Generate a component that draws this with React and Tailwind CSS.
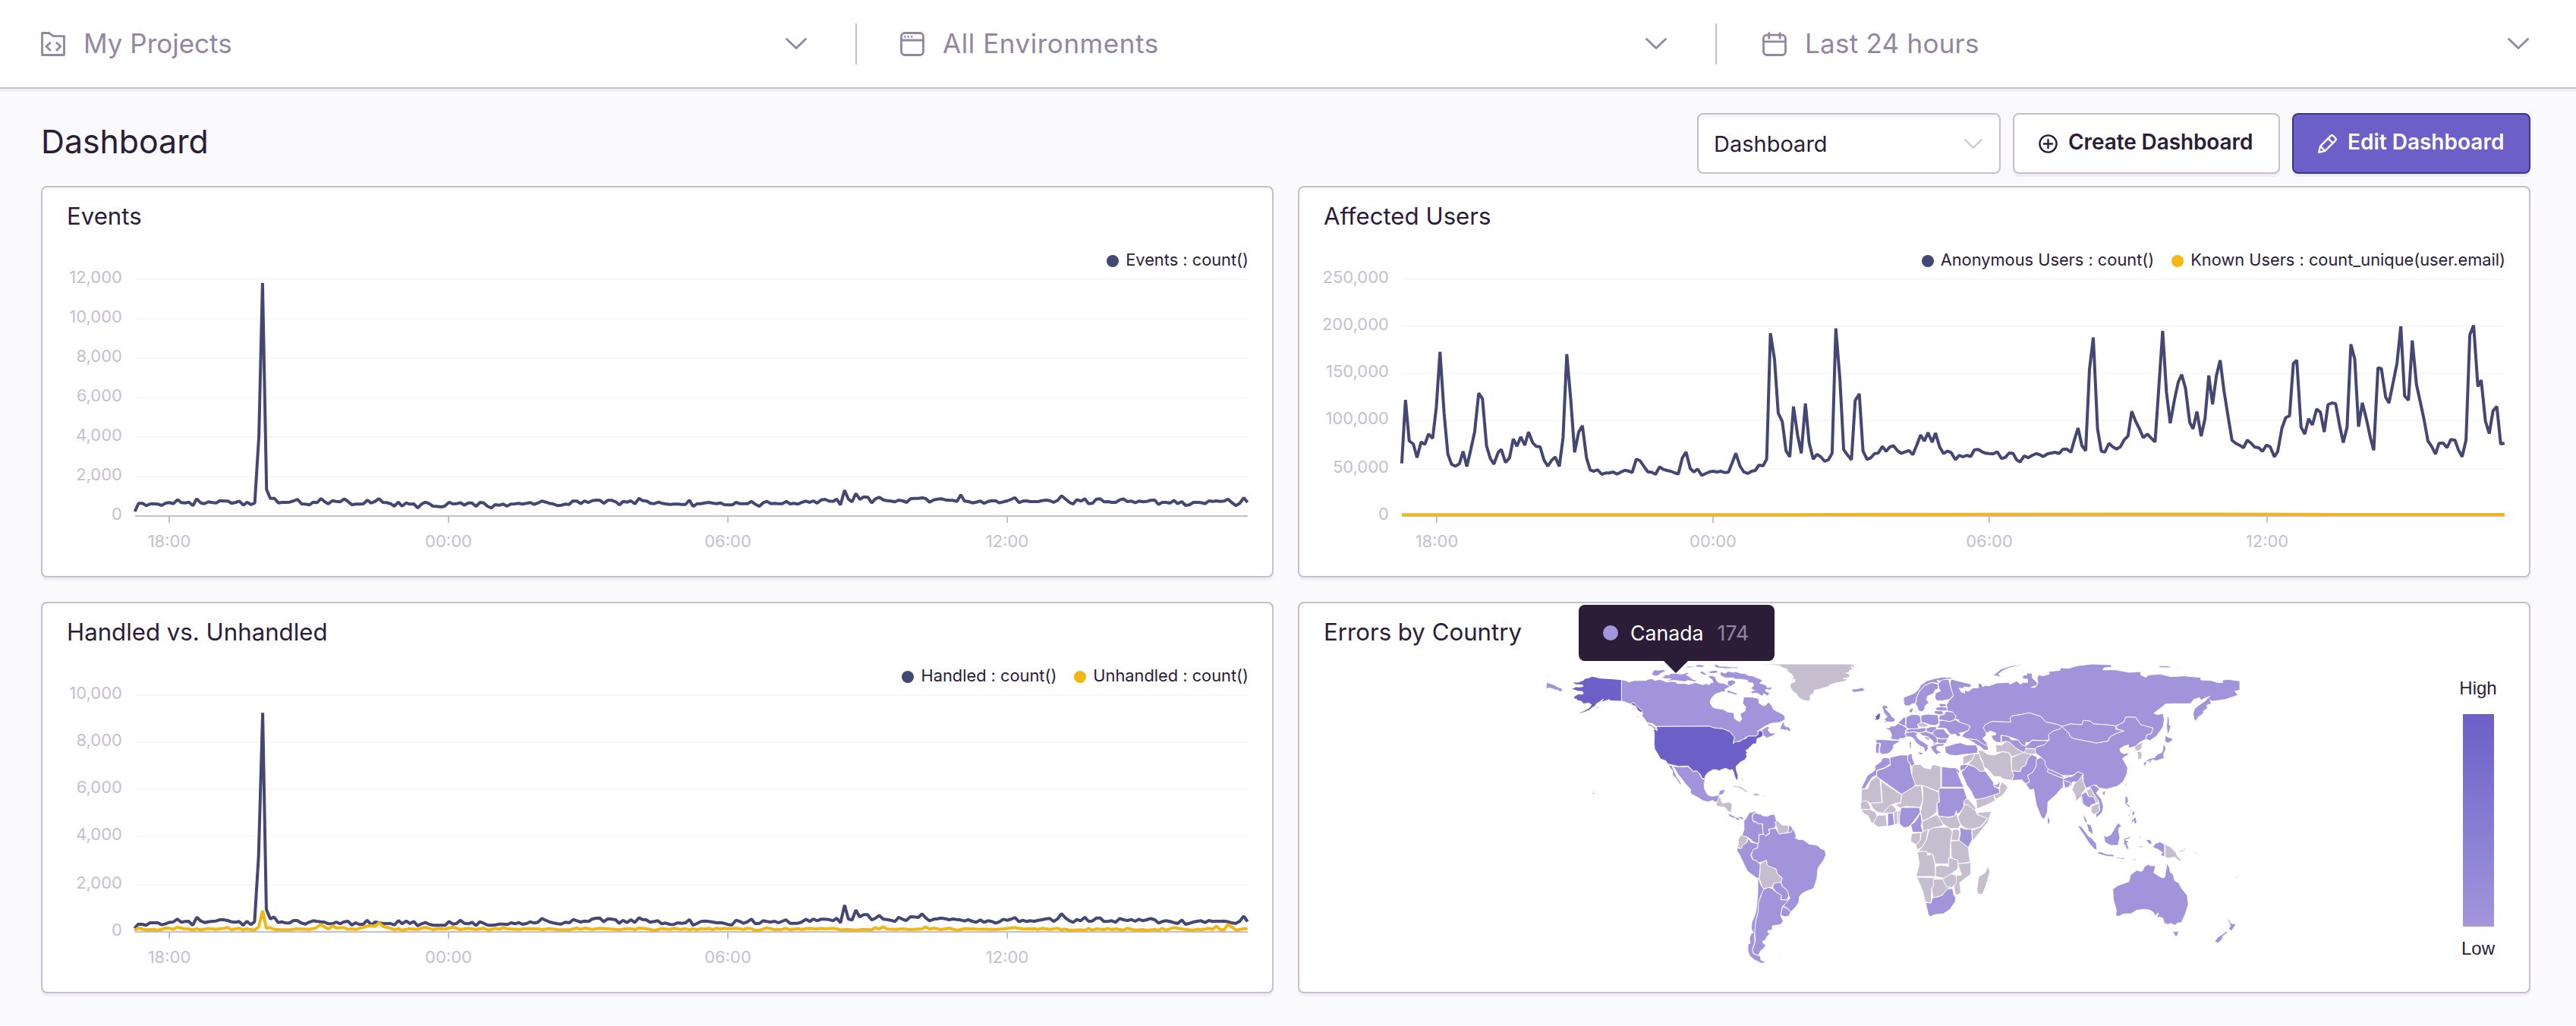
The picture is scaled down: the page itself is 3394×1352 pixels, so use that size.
import React from "react";

const NAVY = "#444674";
const GOLD = "#f2b712";

/* ---------- chart data: [offset, scale] frames and sampled points ---------- */

const trace = (segments) =>
  segments
    .flatMap(({ x, y, k, pts }) =>
      pts
        .trim()
        .split(/\s+/)
        .map((p) => {
          const [a, b] = p.split(",").map(Number);
          return `${(a / k + x).toFixed(1)},${(b / 3 + y).toFixed(1)}`;
        })
    )
    .join(" ");

const events = trace([
  {
    x: -16,
    y: -15,
    k: 1.8667,
    pts: "257,1002 266,970 276,970 285,979 295,972 304,972 314,973 323,978 333,969 342,967 352,971 362,955 371,967 380,968 390,965 400,979 409,952 419,968 428,971 438,964 447,967 457,968 466,959 476,961 486,961 495,970 505,966 514,961 524,977 533,965 543,975 552,968 562,705 571,98 581,915 590,950 600,950 610,968 619,966 629,966 638,965 648,960 657,954 667,972 676,973 686,976 696,965 705,967 715,951 724,964 733,972 743,959 752,962 762,964 772,952 781,962 791,976 800,973 810,973 819,972 829,957 838,969 848,962 857,951 867,966 876,967 886,971 895,981 905,965 914,981 924,968 933,973 943,972 953,988 962,973 971,965 981,971 990,981 1000,982 1010,984 1019,981 1030,965 1039,972 1049,971 1058,967 1067,977 1077,968 1086,968 1096,982 1106,966 1115,968 1124,981 1134,988 1143,975 1153,977 1163,973 1172,981 1182,973 1191,972 1201,970 1210,973 1220,970 1230,967 1239,974 1249,968 1258,961 1268,965 1277,970 1287,973 1297,979 1306,977 1316,973 1325,974 1334,961 1344,961 1354,971 1363,960 1372,967 1382,959 1392,957 1401,958 1411,970 1420,958 1430,958 1440,964 1449,976 1458,962 1468,965 1477,960 1487,972 1497,950 1506,959 1516,961 1525,970 1535,971 1545,965 1554,970 1563,972",
  },
  {
    x: 804,
    y: 185,
    k: 1.8233,
    pts: "42,374 51,373 60,373 70,374 79,374 88,357 97,382 107,371 116,371 125,368 135,366 144,369 153,371 163,368 172,375 181,376 191,376 200,366 209,371 218,371 228,371 237,362 246,373 256,382 265,368 274,362 284,371 293,370 302,371 311,371 321,362 330,372 339,370 349,373 358,366 368,361 377,366 386,360 395,369 405,356 414,354 423,361 433,362 442,353 451,376 461,318 470,353 479,364 488,331 498,354 507,344 517,346 526,368 535,352 544,346 554,356 563,359 572,361 582,364 591,357 600,360 610,366 619,352 628,350 638,350 647,348 656,351 665,365 675,356 684,353 693,352 703,356 712,358 721,358 731,362 740,336 749,361 759,363 768,368 777,365 787,361 796,370 805,363 814,359 824,360 833,368 842,364 852,360 861,354 870,347 880,367 889,361 898,360 907,363 917,363 926,363 935,359 945,357 954,359 963,366 973,358 982,340 991,352 1001,366 1010,373 1019,355 1029,361 1038,352 1047,371 1056,370 1066,353 1075,352 1084,364 1094,363 1103,366 1112,366 1122,356 1131,352 1140,363 1150,361 1159,367 1168,361 1178,364 1187,362 1196,358 1206,357 1215,374 1224,366 1233,366 1243,369 1252,358 1261,371 1271,363 1280,378 1289,376 1299,366 1308,366 1317,367 1327,371 1336,360 1345,362 1354,360 1363,362 1373,361 1382,353 1392,368 1401,379 1410,370 1420,348 1429,366",
  },
]);

const anonymous = trace([
  {
    x: -12,
    y: -15,
    k: 1.8447,
    pts: "271,812 280,561 289,723 299,735 308,789 318,727 327,737 336,696 346,713 355,590 364,371 374,615 383,775 392,815 401,823 411,814 420,764 429,824 439,755 448,688 458,534 467,556 477,743 486,792 495,815 505,769 513,757 523,808 533,790 542,715 551,744 560,707 570,740 579,688 589,730 598,745 607,746 617,800 626,823 635,800 644,787 654,824 663,710 672,380 682,565 691,768 701,688 710,663 720,790 729,838 738,843 747,837 757,855 766,850 775,850 785,846 794,854 804,846 813,839 822,842 831,848 841,795 850,801 860,825 869,845 878,847 888,855 897,826 906,835 916,840 925,843 934,849 943,854 953,790 962,767 972,832 981,846 990,834 1000,859 1010,852 1019,845 1028,843 1037,846 1046,843 1056,848 1065,847 1074,810 1083,772 1093,822 1102,845 1112,852 1121,843 1130,840 1139,819 1149,821 1158,795 1167,297 1177,400 1186,613 1196,647 1205,763 1214,786 1223,587 1233,700 1242,772 1252,575 1261,730 1271,795 1280,776 1289,785 1299,804 1308,797 1317,772 1326,278 1336,480 1345,757 1354,778 1364,798 1373,563 1383,537 1392,763 1402,796 1411,790 1420,773 1429,771 1439,745 1448,764 1457,747 1466,742 1476,762 1485,772 1495,766 1504,761 1513,778 1523,738 1532,700 1541,724 1550,690 1560,728",
  },
  {
    x: 808,
    y: -15,
    k: 1.7941,
    pts: "54,692 64,748 73,773 82,763 91,769 101,797 110,780 119,786 128,780 137,785 146,758 155,757 164,766 173,772 182,773 191,774 200,766 210,793 219,788 228,771 237,772 246,798 254,806 264,782 273,790 282,781 292,773 300,777 309,785 319,774 328,771 337,768 346,773 355,756 364,755 374,768 383,715 391,672 400,742 409,762 418,440 427,314 437,675 446,763 454,768 464,733 473,746 482,755 491,746 500,719 509,704 518,606 527,645 536,675 545,710 555,696 564,712 573,727 582,510 591,288 600,530 609,653 619,560 628,490 636,461 645,515 655,650 663,675 672,607 682,704 691,635 700,464 709,578 718,465 727,404 736,525 746,630 755,721 764,733 773,740 782,750 791,720 800,732 809,748 818,750 827,764 836,740 845,746 855,786 863,765 873,672 882,631 891,624 900,417 908,404 918,668 927,696 936,635 945,660 955,597 964,610 973,688 982,580 991,573 1000,576 1009,660 1018,730 1027,668 1036,341 1045,400 1054,667 1063,572 1073,640 1082,710 1090,760 1100,434 1108,437 1118,550 1126,573 1136,490 1145,415 1154,270 1163,545 1172,562 1181,326 1191,500 1200,570 1209,640 1218,723 1227,745 1236,775 1244,733 1254,731 1263,750 1272,718 1282,720 1290,758 1299,785 1308,720 1317,304 1326,266 1336,508 1344,483 1354,645 1363,694 1372,604 1381,587 1390,735 1399,732",
  },
]);

const handled = trace([
  {
    x: 4,
    y: -23,
    k: 1.8667,
    pts: "219,1030 228,1013 238,1014 247,1018 257,1008 266,1008 276,1008 286,1016 295,1012 305,1006 314,1005 324,993 334,1006 343,1003 352,1002 362,1018 372,986 381,1000 391,1007 400,1004 410,1002 419,1001 429,996 438,996 448,999 457,1004 467,1006 476,1003 486,1018 495,1002 505,1015 514,1004 524,745 534,178 543,955 553,993 562,985 572,1007 581,1004 591,1009 600,1009 610,999 619,999 629,1009 639,1013 648,1006 658,1000 667,1002 677,1004 687,1006 696,1012 706,1012 715,1005 725,1012 734,1004 744,1002 753,1017 763,1008 772,1015 782,1013 791,998 801,1016 811,1005 820,1008 830,1011 839,1011 849,1011 858,1017 868,999 877,1012 887,1001 896,1011 906,1003 915,1020 925,1012 934,1007 944,1014 954,1018 963,1018 973,1018 983,1018 992,1003 1002,1013 1011,1011 1020,998 1030,1010 1040,1012 1049,1006 1059,1019 1068,1004 1078,1010 1088,1018 1097,1018 1107,1016 1116,1013 1126,1013 1136,1015 1145,1008 1155,1012 1164,1007 1173,1014 1183,1011 1192,1004 1202,1009 1211,1006 1221,991 1230,998 1240,1005 1250,1009 1259,1012 1268,1013 1278,1006 1288,1008 1298,995 1307,1000 1316,1005 1326,1001 1335,1003 1345,993 1354,990 1363,989 1373,1004 1383,992 1393,994 1402,996 1411,1010 1420,998 1430,1007 1440,996 1449,1007 1460,988 1468,995 1477,996 1487,1006 1497,1003 1506,1000 1516,1012 1525,1009 1535,1014 1545,1015 1554,1008",
  },
  {
    x: 804,
    y: 257,
    k: 1.8233,
    pts: "70,170 79,168 88,155 97,178 107,170 116,163 125,161 135,163 144,165 153,168 163,167 172,170 181,175 190,177 200,158 210,163 218,170 228,164 237,153 246,171 256,171 265,160 274,163 283,165 293,162 302,168 311,162 320,156 330,170 339,170 348,170 358,165 368,154 377,163 386,153 395,160 404,154 413,154 423,155 433,160 442,150 451,168 461,98 470,153 479,157 488,118 497,145 507,136 516,136 526,157 535,150 544,139 554,154 563,155 572,158 582,163 591,146 600,154 609,159 619,144 628,145 638,147 647,133 656,149 665,160 675,154 684,152 693,149 703,152 712,156 721,153 731,155 740,157 749,161 758,156 768,162 777,166 787,157 796,166 805,160 815,163 824,169 833,164 842,154 851,158 861,154 870,147 880,164 889,158 898,163 907,160 917,162 926,158 935,156 945,152 954,151 963,163 973,152 982,132 991,148 1001,160 1010,166 1019,155 1028,160 1038,146 1047,162 1056,161 1066,149 1075,149 1084,163 1094,162 1103,160 1112,166 1122,151 1131,156 1140,159 1150,155 1159,162 1168,154 1178,160 1187,156 1196,151 1206,156 1215,169 1224,163 1233,160 1243,163 1252,167 1261,171 1271,157 1280,174 1289,170 1299,165 1308,162 1317,160 1327,167 1336,159 1345,163 1354,162 1363,162 1373,161 1382,164 1392,169 1401,170 1410,162 1420,142 1429,163",
  },
]);

const unhandled = trace([
  {
    x: 4,
    y: -23,
    k: 1.8667,
    pts: "219,1038 228,1029 238,1033 247,1036 266,1034 276,1037 286,1034 295,1029 305,1030 314,1034 324,1025 334,1029 343,1032 352,1033 362,1036 372,1032 381,1036 400,1031 410,1031 419,1034 438,1030 448,1027 457,1035 476,1030 486,1035 495,1032 514,1037 524,1025 534,960 543,1030 553,1027 562,1034 581,1036 600,1036 619,1032 648,1034 663,1030 677,1015 687,1025 696,1033 706,1020 715,1028 734,1027 744,1034 753,1032 763,1034 782,1026 791,1021 801,1020 811,1022 820,1008 830,1022 849,1030 858,1035 868,1032 877,1037 896,1031 915,1034 934,1026 954,1035 963,1031 983,1033 1002,1025 1020,1035 1040,1030 1059,1035 1078,1029 1088,1037 1107,1030 1116,1034 1126,1027 1136,1032 1164,1034 1183,1031 1211,1032 1221,1035 1240,1031 1259,1035 1288,1036 1307,1029 1316,1034 1326,1029 1345,1034 1363,1030 1402,1034 1411,1036 1430,1031 1440,1031 1449,1035 1460,1029 1477,1031 1497,1038 1516,1031 1535,1034 1545,1030 1563,1034",
  },
  {
    x: 804,
    y: 257,
    k: 1.8233,
    pts: "79,191 88,196 97,192 107,195 116,191 125,193 135,190 144,195 153,190 163,193 172,190 181,192 200,190 218,194 228,190 237,191 246,198 256,198 274,188 293,195 311,194 320,190 330,195 348,191 358,194 377,190 395,193 404,190 413,192 433,190 451,196 470,195 488,197 507,194 526,196 535,187 544,193 554,184 563,193 582,194 600,192 619,195 647,192 656,184 665,194 675,189 693,195 712,189 731,198 749,191 777,193 824,194 842,192 870,187 889,193 917,191 926,194 935,190 954,194 973,190 982,196 991,193 1001,198 1028,196 1038,198 1047,191 1056,197 1066,192 1084,195 1094,190 1103,195 1112,192 1131,197 1140,190 1159,197 1178,195 1187,198 1206,194 1215,198 1224,190 1233,197 1252,187 1271,193 1299,198 1308,193 1317,196 1336,190 1345,194 1354,181 1363,195 1373,195 1382,174 1401,197 1420,191 1429,191",
  },
]);

const knownUsers = "135,323.3 640,323.3 760,322.7 1200,322.5 1360,322.9 1588,322.9";

/* ---------- icons ---------- */

const ProjectIcon = () => (
  <svg viewBox="0 0 16 16" className="size-8" fill="none" stroke="currentColor" strokeWidth="1.4" strokeLinejoin="round" strokeLinecap="round">
    <path d="M.75.75h4.5l2.9 2.1h7.1v12.4H.75z" />
    <path d="M6 7.2 3.5 9.6 6 12M10.4 7.2l2.5 2.4-2.5 2.4" />
  </svg>
);

const WindowIcon = () => (
  <svg viewBox="0 0 16 16" className="size-8" fill="none" stroke="currentColor" strokeWidth="1.4" strokeLinecap="round">
    <rect x=".75" y=".75" width="14.5" height="14.5" rx="2.2" />
    <path d="M.9 5.5h14.2" />
    <path d="M3.2 3.2h0M5.4 3.2h0M7.6 3.2h0" strokeWidth="1.3" />
  </svg>
);

const CalendarIcon = () => (
  <svg viewBox="0 0 16 16" className="size-8" fill="none" stroke="currentColor" strokeWidth="1.4" strokeLinecap="round">
    <rect x=".75" y="2.1" width="14.5" height="13.15" rx="2.2" />
    <path d="M.9 6.4h14.2M4.4.8v3.4M11.6.8v3.4" />
  </svg>
);

const AddIcon = () => (
  <svg viewBox="0 0 16 16" className="size-[25px]" fill="none" stroke="currentColor" strokeWidth="1.5" strokeLinecap="round">
    <circle cx="8" cy="8" r="7.1" />
    <path d="M8 4.4v7.2M4.4 8h7.2" />
  </svg>
);

const EditIcon = () => (
  <svg viewBox="0 0 16 16" className="size-[25px]" fill="none" stroke="currentColor" strokeWidth="1.5" strokeLinecap="round" strokeLinejoin="round">
    <path d="M.8 15.2 2 10l8.8-8.8q1-.8 2 0l2 2q.8 1 0 2L6 14z" />
    <path d="m8.6 3.4 4 4M2.2 10.2 5.8 13.8" />
  </svg>
);

const Chevron = ({ className }) => (
  <svg viewBox="0 0 28 15" className={className} fill="none" stroke="currentColor" strokeWidth="2.8" strokeLinecap="round" strokeLinejoin="round">
    <path d="m1.5 1.5 12.5 12 12.5-12" />
  </svg>
);

/* ---------- shared pieces ---------- */

const Panel = ({ title, children }) => (
  <section className="relative flex h-[516px] flex-col rounded-lg border-2 border-[#c6becf] bg-white shadow-[0_4px_0_#f1eef5]">
    <h2 className="mt-[18px] ml-8 h-10 text-[31.2px] leading-10">{title}</h2>
    {children}
  </section>
);

const Legend = ({ items }) => (
  <div className="mt-6 flex h-[26px] justify-end gap-[23px] pr-[31px] text-[21.8px] leading-[26px]">
    {items.map(([color, label]) => (
      <span key={label} className="flex items-center gap-[9px] whitespace-nowrap">
        <i className="mt-1 size-4 rounded-full" style={{ background: color }} />
        {label}
      </span>
    ))}
  </div>
);

const LineChart = ({ rows, left, ticks, lines }) => (
  <svg viewBox="0 0 1620 404" className="h-[404px] w-[1620px] overflow-visible" fill="none">
    {rows.map(([label, y]) => (
      <g key={label}>
        <path d={`M${left} ${y}H1588`} stroke={label === "0" ? "#c6becf" : "#f7f7f9"} strokeWidth="2" />
        <text x={left - 17} y={y + 4.7} textAnchor="end" fontSize="22" fill="#c6becf">
          {label}
        </text>
      </g>
    ))}
    {["18:00", "00:00", "06:00", "12:00"].map((t, i) => (
      <g key={t}>
        <path d={`M${ticks[i]} 325v9`} stroke="#c6becf" strokeWidth="2" />
        <text x={ticks[i]} y="366" textAnchor="middle" fontSize="22" fill="#c6becf">
          {t}
        </text>
      </g>
    ))}
    {lines.map(([color, points]) => (
      <polyline key={color} points={points} stroke={color} strokeWidth="4" strokeLinejoin="bevel" />
    ))}
  </svg>
);

/* ---------- world map ---------- */

const C = { low: "#a194da", high: "#6c5fc7", none: "#c6becf" };

const west = {
  high: [
    "M349,347 300,343 262,341 250,337 232,334 220,340 205,342 198,350 190,352 180,357 155,357 168,366 180,367 195,367 197,374 183,376 170,375 158,380 148,384 165,388 175,392 195,394 198,403 188,405 180,403 163,412 160,422 172,424 175,430 190,432 200,443 212,440 222,440 230,446 222,458 200,470 170,483 195,478 222,468 232,458 245,452 250,442 262,435 277,423 270,436 300,425 305,430 325,431 349,432Z",
    "M349,432 362,435 385,444 395,437 405,445 415,455 432,470 430,478 415,470 405,452 390,446 372,440Z",
    "M247,459 261,452 257,460Z",
    "M149,433 158,431 157,436Z",
    "M234,792 243,796 237,801Z",
    "M487,532 697,531 712,537 750,541 777,552 796,575 790,600 800,592 815,592 830,582 840,580 850,570 880,570 890,562 890,550 897,548 908,552 908,568 900,575 885,580 882,600 870,601 858,612 850,620 854,628 845,622 840,630 848,632 842,640 845,652 835,665 820,672 802,690 803,705 810,725 808,745 802,742 796,728 793,715 787,702 778,705 760,697 745,702 735,708 725,703 710,703 690,715 680,728 680,738 668,737 660,720 645,706 633,710 625,700 612,688 575,690 548,683 532,680 525,668 503,660 495,645 480,620 478,600 479,560 475,540 490,548Z",
  ],
  low: [
    "M52,357 85,368 95,375 110,380 122,378 112,384 118,390 105,395 98,388 88,388 75,382 60,380 52,385Z",
    "M52,333 66,335 52,337Z",
    "M115,403 135,404 125,406Z",
    "M349,347 365,350 380,356 400,350 445,350 455,345 470,343 480,350 500,346 510,349 530,357 540,354 562,355 570,362 600,362 615,366 640,358 670,367 685,362 695,368 700,360 712,357 705,345 690,335 700,330 720,335 725,350 735,360 750,360 770,368 778,375 758,385 760,395 745,395 718,405 702,425 700,440 710,456 722,460 750,464 770,475 793,478 796,500 815,514 824,503 818,482 838,470 840,455 828,440 833,415 865,416 885,420 893,425 893,440 910,450 920,447 930,435 945,452 950,465 970,475 980,480 995,490 996,505 975,516 940,520 915,532 885,552 905,545 925,532 935,535 928,545 938,558 962,558 945,570 922,578 918,572 908,568 908,552 897,548 890,552 890,562 880,570 850,570 830,582 815,590 790,600 796,575 775,550 745,540 710,537 697,531 487,532 470,520 450,517 440,502 430,490 433,480 428,470 408,450 395,437 385,444 362,435 349,432Z",
    "M448,518 465,523 485,538 490,550 478,543 470,533 460,530Z",
    "M408,488 418,492 414,498Z",
    "M973,543 980,530 985,518 995,513 992,525 998,532 1012,535 1020,550 1008,551 1005,545 995,547 985,543Z",
    "M468,325 478,308 495,310 512,307 528,312 515,317 505,322 492,332 478,332Z",
    "M502,337 520,335 512,328 540,328 540,322 560,322 590,325 610,318 618,322 605,328 618,335 630,345 650,350 640,355 612,350 600,355 560,350 525,352 545,343 520,343Z",
    "M640,290 655,287 677,290 670,298 645,297Z",
    "M710,286 730,288 735,294 760,294 790,297 812,297 810,302 760,303 725,300Z",
    "M655,318 668,313 685,324 682,330 668,325Z",
    "M692,315 720,309 735,318 715,322 700,322Z",
    "M738,325 742,315 760,322 770,313 790,318 800,315 822,322 835,322 850,330 868,332 880,338 900,345 908,352 895,360 920,368 925,378 948,376 935,388 920,385 918,392 935,400 928,412 912,402 905,412 885,400 865,402 860,393 875,390 860,380 872,370 868,360 845,357 850,350 820,345 800,345 790,340 760,340 745,333Z",
    "M765,398 770,388 790,395 808,402 802,408 785,402Z",
    "M768,352 785,348 800,352 798,362 780,374 768,368Z",
    "M490,289 515,287 510,290Z",
    "M590,302 612,294 640,294 628,299 605,300Z",
    "M540,296 575,292 590,300 560,303Z",
    "M535,683 548,686 556,705 570,735 580,748 588,764 578,758 566,738 552,725 550,705 540,695Z",
    "M552,688 575,692 612,690 625,702 633,712 645,706 655,715 668,738 680,742 676,755 676,775 685,795 695,805 710,808 732,803 738,785 758,780 758,786 750,800 735,804 735,812 727,828 720,832 710,824 690,830 670,825 650,812 622,797 622,780 600,757 585,735 575,725 560,700Z",
    "M770,875 782,880 790,885 808,893 818,887 828,890 833,903 825,900 818,893 808,905 800,895 788,893 775,887Z",
    "M910,806 922,807 914,810Z",
    "M833,905 840,898 850,880 855,872 870,870 878,864 880,870 868,880 866,890 870,908 880,910 890,916 905,917 907,935 910,957 892,960 893,990 885,995 865,985 860,978 848,970 825,962 834,940Z",
    "M870,878 884,872 888,878 900,878 905,884 925,887 940,880 955,880 957,888 962,905 956,912 960,920 956,932 940,937 930,937 935,950 920,965 911,962 908,945 907,917 890,916 880,908 870,906 866,893Z",
    "M1011,927 1016,922 1027,937 1018,952 1007,950Z",
    "M806,1012 822,1015 828,1002 845,990 850,975 862,990 888,995 888,1010 870,1020 860,1040 867,1058 878,1060 890,1070 897,1075 897,1090 893,1132 885,1132 848,1105 840,1090 828,1065 815,1038 807,1025Z",
    "M893,960 911,958 920,965 935,955 932,940 945,935 956,935 960,935 972,958 985,955 1008,952 1020,950 1028,935 1034,950 1040,965 1035,972 1052,980 1065,978 1085,992 1090,997 1115,1000 1125,1003 1137,1015 1153,1020 1157,1040 1148,1060 1128,1088 1125,1095 1122,1130 1115,1155 1108,1172 1098,1177 1075,1185 1060,1195 1052,1205 1050,1228 1038,1245 1018,1265 1005,1250 988,1243 1015,1210 1008,1195 1000,1175 985,1165 980,1148 985,1130 965,1115 960,1095 935,1085 925,1080 922,1060 905,1068 890,1070 880,1060 870,1060 862,1040 870,1018 888,1012 888,998 892,990Z",
    "M947,1170 952,1152 970,1148 980,1150 985,1165 1000,1175 1008,1190 1010,1205 1000,1218 978,1215 982,1200 965,1190Z",
    "M985,1243 1005,1252 1018,1265 1010,1282 995,1284 978,1278 982,1262Z",
    "M912,1175 930,1168 943,1172 965,1190 982,1200 978,1217 1000,1218 1012,1208 1000,1230 985,1243 978,1280 988,1300 982,1312 970,1317 945,1320 945,1337 928,1338 928,1347 935,1352 922,1365 920,1375 908,1380 908,1388 920,1397 910,1410 898,1420 890,1438 870,1428 866,1415 872,1400 878,1380 875,1340 880,1300 890,1260 888,1230 900,1205 903,1190Z",
    "M888,1135 893,1135 900,1160 912,1175 902,1195 890,1230 890,1260 880,1300 875,1350 876,1385 866,1415 870,1430 898,1440 900,1455 925,1465 900,1468 890,1462 875,1455 855,1438 848,1415 850,1390 858,1390 855,1370 862,1350 870,1348 862,1330 865,1305 875,1280 882,1255 888,1190Z",
  ],
  none: [
    "M893,285 1265,285 1272,293 1255,298 1268,305 1250,310 1250,318 1235,320 1252,325 1250,338 1225,342 1245,346 1230,354 1190,362 1175,367 1165,375 1130,385 1112,388 1108,402 1095,408 1095,425 1088,432 1068,428 1050,418 1040,402 1028,395 1015,375 1018,362 1035,355 1035,346 1008,342 1030,338 1022,325 1010,318 1000,303 985,300 975,292Z",
    "M722,840 728,828 732,815 742,812 743,828 752,835 775,830 787,842 783,872 770,868 762,855 750,850 742,850 725,846Z",
    "M780,772 800,765 820,770 830,777 852,790 840,792 828,783 808,772Z",
    "M868,797 885,795 902,803 890,805 880,808 868,803Z",
    "M828,808 838,807 834,810Z",
    "M958,900 967,905 985,922 1010,922 1008,950 985,955 975,960 968,955 965,938 958,920Z",
    "M820,962 835,965 848,972 845,988 828,1002 822,1015 806,1008 812,998 810,980Z",
    "M897,1075 922,1060 926,1080 960,1095 965,1115 985,1132 980,1148 952,1152 945,1168 925,1170 908,1175 902,1155 893,1132 897,1105Z",
    "M958,1436 980,1433 974,1438Z",
    "M819,733 832,740 828,748 820,735Z",
  ],
};

const east = {
  high: ["M88,312 95,308 103,299 110,303 108,312 106,322 98,327 86,325 92,318Z"],
  low: [
    "M0,204 20,203 38,198 52,207 40,213 10,217 0,214Z",
    "M380,165 405,172 430,178 450,183 458,188 450,198 430,195 425,202 410,200 418,215 432,220 430,208 445,213 462,200 485,198 482,182 495,182 500,195 510,190 525,191 555,180 600,178 605,185 630,172 645,185 655,178 672,178 672,165 652,163 655,150 670,148 668,140 690,142 690,160 710,180 707,190 685,197 700,198 712,180 708,160 715,148 730,152 755,145 752,135 795,130 800,120 830,122 860,112 920,105 990,108 995,118 965,120 960,128 1010,128 1060,138 1105,135 1105,148 1125,158 1135,148 1180,145 1220,155 1270,152 1335,158 1335,168 1375,170 1398,178 1418,178 1418,168 1440,166 1484,172 1484,208 1465,213 1478,228 1450,238 1430,245 1380,252 1370,248 1375,262 1358,268 1360,282 1345,290 1345,300 1325,315 1315,332 1308,320 1305,300 1312,280 1335,262 1350,252 1370,232 1355,238 1335,248 1330,238 1308,245 1295,262 1240,262 1200,263 1180,280 1155,300 1170,305 1190,300 1195,325 1190,355 1165,390 1140,408 1125,402 1127,385 1145,380 1152,358 1115,350 1105,345 1085,315 1048,315 1040,335 1010,350 975,345 925,342 910,330 885,328 880,345 835,342 803,352 790,345 770,340 742,335 722,312 700,305 680,298 645,305 612,310 605,320 608,335 560,333 535,332 510,345 502,358 515,372 512,388 500,400 515,415 520,432 505,425 478,405 440,400 420,392 428,378 445,368 452,350 440,345 410,335 408,325 390,322 398,310 385,295 365,290 362,265 372,248 388,232 380,205 375,180Z",
    "M540,150 570,125 610,112 660,106 640,112 610,118 580,130 560,145 572,157Z",
    "M1170,113 1200,112 1220,115 1215,120 1180,119Z",
    "M1190,133 1218,134 1200,135Z",
    "M1240,117 1266,122 1245,121Z",
    "M1208,305 1214,325 1214,345 1220,352 1212,378 1206,380 1204,350 1206,325Z",
    "M197,238 215,230 240,220 255,205 262,190 285,172 315,163 345,157 385,158 378,165 360,165 345,172 325,170 335,182 305,177 275,192 258,213 248,235 246,252 240,262 230,262 220,270 205,270 199,262Z",
    "M246,252 248,235 258,213 278,190 305,178 330,185 330,203 318,208 312,222 290,232 285,245 295,258 280,270 278,285 268,294 255,290 250,275 243,262Z",
    "M330,182 345,168 370,165 376,190 380,205 388,230 372,245 345,250 325,250 317,240 320,220 340,210 333,203Z",
    "M220,285 232,278 235,285 230,298 220,296Z",
    "M240,293 248,290 246,300Z",
    "M330,262 358,262 362,272 340,275Z",
    "M318,278 338,274 362,276 366,290 345,290 325,288Z",
    "M315,290 345,290 352,303 335,306 315,300Z",
    "M115,275 122,267 132,270 140,278 128,282 135,290 148,303 152,312 165,322 165,332 150,335 135,333 120,340 130,328 122,325 130,318 135,312 125,302 120,290Z",
    "M207,318 215,310 228,305 250,305 262,312 265,335 250,345 257,358 240,363 212,360 205,350 207,335Z",
    "M175,338 190,325 195,317 207,315 205,340 205,352 190,345Z",
    "M125,357 145,357 148,350 165,350 175,340 190,345 212,360 205,372 203,382 210,392 195,400 185,398 178,406 148,402 152,385 145,368Z",
    "M92,403 120,404 178,407 182,412 160,425 157,440 145,455 135,460 118,462 108,458 105,445 110,420 92,417Z",
    "M93,418 107,418 105,432 103,458 92,457 90,440Z",
    "M203,378 215,375 235,372 252,378 245,388 255,402 275,415 298,430 290,430 292,440 280,455 275,435 262,430 245,415 235,398 225,393 210,393Z",
    "M250,453 272,455 268,465 255,460Z",
    "M220,413 228,411 226,440 221,440Z",
    "M203,368 220,362 255,360 280,356 285,368 262,378 235,372 215,376Z",
    "M264,308 290,303 328,306 332,325 332,340 320,348 300,347 285,340 265,335Z",
    "M283,360 300,353 325,353 322,368 305,378 285,372Z",
    "M312,370 325,362 352,362 362,378 374,385 368,400 340,400 322,395 308,380Z",
    "M325,398 345,402 366,400 360,418 345,420 328,418Z",
    "M258,378 280,372 300,378 315,385 325,398 328,415 315,418 305,405 290,392 270,388Z",
    "M300,432 315,425 330,420 355,420 350,428 325,432 325,445 345,455 330,458 325,465 310,450Z",
    "M332,325 335,308 352,305 360,292 385,295 398,310 392,325 375,333 350,328Z",
    "M325,358 335,345 332,330 350,328 375,333 395,325 412,335 440,345 452,350 445,368 425,375 410,378 420,388 405,392 395,382 380,385 370,375 360,360 340,358Z",
    "M355,432 370,428 395,420 415,416 440,425 475,425 482,440 480,457 455,460 430,462 400,467 375,465 358,455Z",
    "M440,400 478,405 500,420 520,430 522,445 505,445 492,432 478,425 465,415Z",
    "M502,358 510,345 535,332 560,333 608,335 605,320 612,310 645,305 680,298 700,305 722,312 742,335 770,340 790,345 803,352 795,362 770,370 752,385 755,405 730,408 690,405 680,415 665,415 665,430 650,425 635,405 600,392 570,387 570,415 555,415 540,405 532,388 550,385 550,378 530,370 515,378Z",
    "M572,387 600,392 610,405 635,405 650,425 665,430 690,407 752,408 735,425 710,432 700,440 665,438 660,455 645,448 625,435 605,415 590,410 572,415Z",
    "M413,508 425,502 445,503 432,520 415,528Z",
    "M418,532 433,520 445,503 470,512 490,530 510,528 525,550 540,570 545,590 565,600 565,615 545,622 520,630 505,635 480,640 470,638 455,605 440,585 425,550Z",
    "M540,582 555,582 568,568 562,595 545,588Z",
    "M612,528 645,530 648,515 665,505 672,480 688,463 705,470 712,485 705,510 690,535 672,545 680,572 665,578 650,563 612,565 620,545Z",
    "M705,483 720,475 735,478 742,500 755,520 748,532 790,550 810,558 825,552 845,548 865,530 885,540 862,572 845,570 838,590 825,570 808,565 808,595 800,598 782,620 750,650 748,690 738,715 730,717 722,705 705,660 695,600 680,603 665,578 680,572 672,545 690,535 705,510Z",
    "M750,520 775,530 805,545 812,557 790,550 748,532Z",
    "M808,563 825,570 838,575 830,592 815,595Z",
    "M748,705 758,722 755,738 748,733Z",
    "M803,352 830,378 835,392 850,400 890,408 935,417 980,410 985,395 1000,385 1015,378 1040,370 1015,362 1010,350 1040,335 1048,315 1085,315 1105,345 1152,358 1145,380 1127,385 1125,402 1105,412 1085,430 1060,438 1058,425 1045,428 1025,440 1028,452 1040,460 1060,455 1055,465 1035,478 1055,515 1052,540 1045,555 1038,570 1015,588 975,600 945,595 935,583 915,590 895,595 885,570 885,540 865,530 845,545 805,545 775,530 750,520 738,500 740,490 720,470 705,460 700,440 710,432 735,425 755,405 752,385 770,370 795,362Z",
    "M803,352 835,342 880,345 885,328 910,330 925,342 975,345 1010,350 1010,362 1040,370 1015,378 1000,385 985,395 980,410 935,417 890,408 850,400 835,392 830,378Z",
    "M878,622 895,610 905,628 925,630 935,655 915,662 910,672 895,668 888,660 886,700 900,725 895,735 885,712 888,675 882,645Z",
    "M897,735 915,742 920,760 922,780 905,765Z",
    "M910,590 925,583 945,595 945,602 935,615 955,640 962,668 958,690 935,713 932,700 948,685 945,650 925,618Z",
    "M1198,388 1212,395 1228,400 1225,408 1210,418 1198,412Z",
    "M1195,424 1202,440 1192,462 1195,478 1180,482 1165,488 1150,483 1140,492 1122,490 1140,478 1158,475 1168,462 1185,455 1190,445 1190,428Z",
    "M1116,492 1128,492 1122,510 1116,502Z",
    "M1133,490 1148,488 1142,497Z",
    "M1052,568 1050,590 1045,582Z",
    "M960,610 972,605 966,625 958,620Z",
    "M1045,630 1053,627 1058,645 1052,658 1062,662 1065,675 1045,658Z",
    "M1062,678 1070,682 1068,690Z",
    "M1072,690 1082,685 1080,702 1072,705Z",
    "M1060,690 1064,708 1057,705Z",
    "M1070,725 1085,708 1090,730 1082,740 1078,725 1068,738Z",
    "M1040,690 1022,712 1038,695Z",
    "M862,743 878,748 905,785 918,795 935,815 938,842 925,835 905,810 890,785 870,755Z",
    "M938,848 955,848 975,857 1000,858 1005,867 980,866 942,856Z",
    "M963,782 975,788 990,780 1005,755 1018,733 1032,745 1022,752 1020,765 1025,790 1018,822 990,822 968,810Z",
    "M1040,795 1068,786 1062,795 1045,800 1060,806 1052,812 1060,835 1052,838 1045,820 1040,838Z",
    "M1005,868 1020,870 1048,872 1040,877 1015,874Z",
    "M1070,883 1090,868 1082,880Z",
    "M1100,778 1104,790 1100,798Z",
    "M1090,825 1122,825 1105,830Z",
    "M1122,798 1142,800 1148,812 1140,820 1150,830 1160,815 1178,808 1196,818 1196,866 1180,862 1188,850 1170,838 1148,828Z",
    "M998,995 1015,982 1060,965 1065,940 1090,920 1105,925 1112,922 1120,905 1135,897 1142,902 1162,903 1155,930 1185,950 1197,948 1205,893 1215,910 1218,928 1228,935 1235,962 1250,970 1260,990 1283,1020 1287,1055 1275,1095 1260,1128 1248,1128 1235,1138 1220,1130 1210,1135 1195,1130 1190,1110 1178,1105 1168,1110 1172,1088 1158,1102 1155,1088 1140,1078 1120,1075 1090,1078 1068,1092 1040,1093 1020,1103 1008,1098 1012,1080 1000,1035Z",
    "M1226,1160 1238,1163 1250,1160 1246,1178 1238,1182Z",
    "M1432,1102 1445,1120 1450,1130 1470,1133 1462,1145 1452,1160 1440,1152 1448,1140Z",
    "M1438,1158 1434,1170 1420,1180 1415,1195 1400,1208 1387,1202 1400,1185 1415,1175Z",
    "M88,525 88,508 112,490 115,478 128,475 145,478 147,500 125,515 95,525 95,545 78,552 68,568 60,580 50,598 35,598 45,575 60,545Z",
    "M145,475 185,465 215,465 213,485 222,500 228,540 242,580 240,588 190,620 95,550 95,527 125,517 147,505Z",
    "M215,463 232,460 230,472 240,500 228,510 222,498 213,485Z",
    "M343,510 375,515 395,515 412,528 410,545 403,530 418,570 428,592 343,592Z",
    "M333,596 428,596 440,635 428,648 428,668 415,690 402,700 400,685 393,705 370,710 345,708 330,705 325,655 335,650 333,620Z",
    "M137,695 158,695 162,740 137,747Z",
    "M188,672 220,672 258,672 262,690 245,715 230,735 218,748 200,752 182,738 182,705Z",
    "M262,692 268,730 265,745 272,770 232,770 225,740 240,730 250,715Z",
    "M412,750 435,758 458,758 460,800 445,830 410,802 415,775Z",
    "M282,1048 303,1050 308,1030 330,1025 345,1020 365,995 385,992 390,1018 398,1030 395,1045 375,1075 350,1092 320,1095 300,1103 292,1095Z",
  ],
  none: [
    "M0,108 12,110 5,120 0,122Z",
    "M0,127 8,130 0,132Z",
    "M250,342 268,336 295,347 280,355 258,353Z",
    "M272,390 298,390 300,402 290,408Z",
    "M308,414 322,412 325,424 312,428Z",
    "M550,425 575,425 590,410 605,415 625,435 660,457 640,462 612,472 600,455 575,452 552,455Z",
    "M660,440 700,440 712,460 685,462 660,458Z",
    "M482,445 500,448 520,462 545,465 575,452 600,455 608,470 610,500 612,530 622,548 612,565 580,560 565,550 545,550 520,522 505,512 500,490 488,465Z",
    "M610,475 640,462 655,455 685,462 685,468 672,480 665,505 648,515 645,530 612,528Z",
    "M425,470 455,462 470,460 460,485 425,505Z",
    "M460,485 470,460 488,460 492,480 500,495 510,528 490,530 470,512 445,500Z",
    "M575,570 597,592 585,612 575,625 550,640 543,622 566,615 565,592Z",
    "M475,640 505,635 543,622 548,645 520,660 478,678Z",
    "M815,543 833,543 833,551 815,551Z",
    "M842,602 850,580 858,572 865,552 880,545 885,570 895,598 880,615 885,650 880,665 875,630 858,648 852,618Z",
    "M897,602 915,598 925,618 945,650 935,655 925,632 905,628Z",
    "M915,668 945,655 948,685 928,700 915,690Z",
    "M1080,432 1095,422 1112,413 1108,438 1098,448 1085,448Z",
    "M1090,452 1105,450 1110,462 1108,480 1092,482 1094,465Z",
    "M1198,818 1218,828 1240,850 1245,865 1265,883 1250,882 1235,868 1215,872 1198,870Z",
    "M1242,846 1268,840 1278,828 1275,840 1262,848Z",
    "M1268,816 1282,828 1278,824Z",
    "M1298,838 1320,852 1345,885 1335,870Z",
    "M1385,922 1393,940 1388,935Z",
    "M1368,972 1388,992 1378,985Z",
    "M1465,952 1486,935 1475,950Z",
    "M232,502 262,502 275,515 300,520 310,502 340,510 340,612 270,585 242,585 228,560 230,520Z",
    "M37,600 60,598 72,565 95,550 108,562 115,652 70,655 60,648 35,655Z",
    "M110,567 190,622 187,652 160,658 150,662 130,680 118,695 95,690 80,675 70,655 117,652Z",
    "M190,620 242,587 265,585 272,640 262,672 240,670 205,668 185,675 165,660 187,655Z",
    "M270,585 333,612 333,650 325,655 325,690 295,715 270,725 262,690 272,640Z",
    "M428,640 445,638 475,675 470,685 440,662 428,660Z",
    "M430,662 445,662 475,688 480,700 520,715 490,750 455,758 435,755 415,740 405,710 420,685Z",
    "M480,692 533,688 520,730 462,805 460,762 495,748 520,715 485,702Z",
    "M32,655 45,645 60,648 72,672 70,680 35,680Z",
    "M35,680 70,680 90,690 98,710 90,730 75,735 62,705 45,695Z",
    "M98,703 130,702 135,745 100,750 82,735Z",
    "M118,695 130,680 150,660 170,678 165,692 137,695Z",
    "M160,695 170,685 175,690 175,738 163,740Z",
    "M175,690 185,680 182,738 177,738Z",
    "M268,728 295,715 325,700 335,715 350,740 340,748 312,752 295,765 272,765Z",
    "M330,708 345,708 370,712 393,705 400,695 405,715 415,740 408,755 375,755 350,738Z",
    "M295,760 312,752 345,750 370,750 385,770 378,800 375,865 370,895 318,895 310,858 280,848 252,845 268,830 285,800Z",
    "M228,775 262,772 262,800 245,820 225,805Z",
    "M264,772 292,757 285,800 268,830 248,840 245,820 262,800Z",
    "M385,760 408,758 412,775 408,802 380,802Z",
    "M378,805 412,803 445,830 452,888 412,895 395,880 380,868Z",
    "M250,848 285,845 290,862 308,855 318,895 320,945 245,945 258,895Z",
    "M320,905 340,900 370,905 370,870 405,880 405,915 370,942 350,952 320,945Z",
    "M405,895 455,890 455,935 412,970 417,1010 398,1020 390,990 400,940 420,940Z",
    "M346,955 380,935 398,940 400,970 382,990 362,985Z",
    "M312,955 346,955 362,985 380,990 365,995 345,1020 310,1030 305,990 312,985Z",
    "M248,948 345,950 312,955 312,985 305,990 303,1050 280,1045 270,1000Z",
    "M357,1056 367,1048 375,1055 364,1065Z",
    "M384,1022 392,1020 392,1034 385,1032Z",
    "M520,905 528,925 515,975 500,1015 482,1015 478,995 485,945 510,930Z",
  ],
};

const Lands = ({ data, transform }) => (
  <g transform={transform}>
    {["none", "low", "high"].map((k) =>
      data[k].map((d, i) => <path key={k + i} d={d} fill={C[k]} vectorEffect="non-scaling-stroke" />)
    )}
  </g>
);

const WorldMap = () => (
  <svg viewBox="2037 875 914 410" className="mt-[22px] ml-[325px] h-[410px] w-[914px]" stroke="#fff" strokeWidth=".9" strokeLinejoin="round">
    <Lands data={west} transform="translate(2020 780) scale(.33333)" />
    <Lands data={east} transform="translate(2440 840) scale(.34439 .33333)" />
  </svg>
);

/* ---------- page ---------- */

const Filter = ({ icon, label, className, labelClass }) => (
  <div className={`flex h-[54px] items-center text-[#9386a0] ${className}`}>
    {icon}
    <span className={labelClass}>{label}</span>
    <Chevron className="ml-auto h-[15px] w-7" />
  </div>
);

export default function App() {
  return (
    <div className="h-[1352px] w-[3394px] bg-[#fafafc] font-['Inter',sans-serif] text-[#2b1d38]">
      <header className="flex h-[117px] items-center border-b-2 border-[#c6becf] bg-white text-[35px] leading-none shadow-[0_4px_0_#f1eef5]">
        <Filter icon={<ProjectIcon />} label="My Projects" className="w-[1129px] border-r-2 border-[#c6becf] pr-[64px] pl-[54px]" labelClass="ml-[24px]" />
        <Filter icon={<WindowIcon />} label="All Environments" className="w-[1133px] border-r-2 border-[#c6becf] pr-[64px] pl-[57px]" labelClass="ml-[24px] tracking-[0.55px]" />
        <Filter icon={<CalendarIcon />} label="Last 24 hours" className="w-[1132px] pr-[62px] pl-[60px]" labelClass="ml-[24px] tracking-[0.25px]" />
      </header>

      <div className="mx-[54px] mt-8 flex h-20 w-[3280px] items-center gap-4">
        <h1 className="mr-auto -mt-[3px] text-[42.8px] leading-none">Dashboard</h1>
        <div className="flex h-20 w-[400px] items-center rounded-lg border-2 border-[#c6becf] bg-white pr-[22px] pl-5 text-[29px] leading-none shadow-[inset_0_4px_0_#f7f6f9]">
          Dashboard
          <Chevron className="ml-auto h-[13px] w-6 text-[#cccccc]" />
        </div>
        <button className="flex h-20 w-[352px] items-center rounded-lg border-2 border-[#c6becf] bg-white pl-[32px] text-[28px] leading-none font-semibold shadow-[0_4px_0_#eeedf1]">
          <AddIcon />
          <span className="-mt-1 ml-[14px] tracking-[-0.1px]">Create Dashboard</span>
        </button>
        <button className="flex h-20 w-[314px] items-center rounded-lg border-2 border-[#3d328e] bg-[#6c5fc7] pl-[32px] text-[28px] leading-none font-semibold text-white shadow-[0_4px_0_#eeedf1]">
          <EditIcon />
          <span className="-mt-1 ml-[14px]">Edit Dashboard</span>
        </button>
      </div>

      <main className="mx-[54px] mt-4 grid w-[3280px] grid-cols-2 gap-8">
        <Panel title="Events">
          <Legend items={[[NAVY, "Events : count()"]]} />
          <LineChart
            left={122}
            rows={[["12,000", 13], ["10,000", 65], ["8,000", 117], ["6,000", 169], ["4,000", 221], ["2,000", 273], ["0", 325]]}
            ticks={[167, 535, 903, 1271]}
            lines={[[NAVY, events]]}
          />
        </Panel>

        <Panel title="Affected Users">
          <Legend items={[[NAVY, "Anonymous Users : count()"], [GOLD, "Known Users : count_unique(user.email)"]]} />
          <LineChart
            left={135}
            rows={[["250,000", 13], ["200,000", 75], ["150,000", 137], ["100,000", 199], ["50,000", 263], ["0", 325]]}
            ticks={[181, 545, 909, 1275]}
            lines={[[NAVY, anonymous], [GOLD, knownUsers]]}
          />
        </Panel>

        <Panel title="Handled vs. Unhandled">
          <Legend items={[[NAVY, "Handled : count()"], [GOLD, "Unhandled : count()"]]} />
          <LineChart
            left={122}
            rows={[["10,000", 13], ["8,000", 75], ["6,000", 137], ["4,000", 199], ["2,000", 263], ["0", 325]]}
            ticks={[167, 535, 903, 1271]}
            lines={[[NAVY, handled], [GOLD, unhandled]]}
          />
        </Panel>

        <Panel title="Errors by Country">
          <div className="flex">
            <WorldMap />
            <div className="mr-[42px] ml-auto flex w-[50px] flex-col items-center pt-10 font-['Liberation_Sans',sans-serif] text-2xl leading-7">
              <span>High</span>
              <div className="mt-5 h-[280px] w-[41px] shrink-0 bg-linear-to-b from-[#6c5fc7] to-[#a396dc]" />
              <span className="mt-[15px]">Low</span>
            </div>
          </div>
          <div className="absolute top-[2px] left-[368px] flex h-[74px] w-[258px] items-center rounded-lg bg-[#2b1d38] pl-8 text-[26.7px] leading-none text-white">
            <i className="size-5 rounded-full bg-[#a396dc]" />
            <span className="ml-4">Canada</span>
            <span className="ml-[18px] text-[#9386a0]">174</span>
            <svg viewBox="0 0 32 16" className="absolute top-full left-[112px] h-4 w-8">
              <path d="M0 0h32L16 16z" fill="#2b1d38" />
            </svg>
          </div>
        </Panel>
      </main>
    </div>
  );
}
